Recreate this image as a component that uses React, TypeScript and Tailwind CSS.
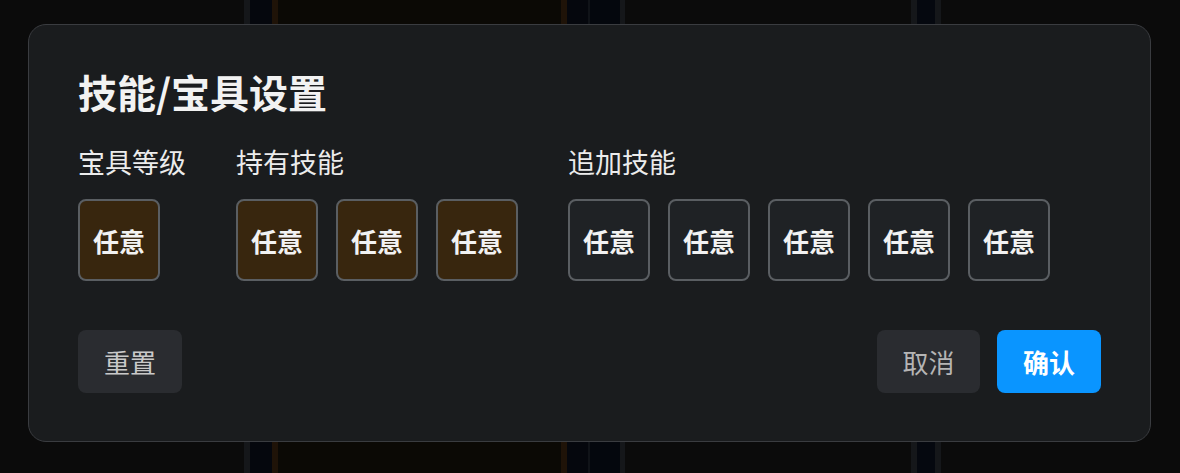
import React from "react";

const font = { fontFamily: '"Noto Sans CJK SC", "Noto Sans", sans-serif' };

function SlotBox({ gold }: { gold?: boolean }) {
  return (
    <div
      className={
        "w-[82px] h-[82px] rounded-[8px] border-2 border-[#5a5e62] flex items-center justify-center text-[26px] font-bold text-[#f2f2f2] " +
        (gold ? "bg-[#38260e]" : "bg-[#1f2225]")
      }
    >
      任意
    </div>
  );
}

function Group({ label, count, gold }: { label: string; count: number; gold?: boolean }) {
  return (
    <div className="flex flex-col gap-[23px]">
      <div className="text-[27px] leading-[28px] text-[#ececec]">{label}</div>
      <div className="flex gap-[18px]">
        {Array.from({ length: count }).map((_, i) => (
          <SlotBox key={i} gold={gold} />
        ))}
      </div>
    </div>
  );
}

export default function App() {
  return (
    <div className="relative w-[1180px] h-[473px] overflow-hidden bg-[#0b0b0b]" style={font}>
      {/* page behind the overlay */}
      <div className="flex h-full">
        <div className="w-[244px] bg-[#0b0b0b]" />
        <div className="w-[6px] bg-[#15171a]" />
        <div className="w-[22px] bg-[#05070d]" />
        <div className="w-[6px] bg-[#1f1308]" />
        <div className="w-[283px] bg-[#0b0905]" />
        <div className="w-[6px] bg-[#1f1308]" />
        <div className="w-[21px] bg-[#05070d]" />
        <div className="w-[2px] bg-[#101318]" />
        <div className="w-[30px] bg-[#04070d]" />
        <div className="w-[5px] bg-[#15171a]" />
        <div className="w-[286px] bg-[#0b0b0b]" />
        <div className="w-[6px] bg-[#15171a]" />
        <div className="w-[18px] bg-[#05080f]" />
        <div className="w-[6px] bg-[#15171a]" />
        <div className="flex-1 bg-[#0b0b0b]" />
      </div>

      {/* dialog */}
      <div className="absolute left-[28px] top-[24px] w-[1123px] h-[418px] rounded-[18px] border border-[#3a3c40] bg-[#1a1c1e] pt-[47px] px-[49px] flex flex-col">
        <h1 className="text-[39px] leading-[39px] font-bold text-[#f2f2f2]">技能/宝具设置</h1>
        <div className="mt-[37px] flex gap-[50px]">
          <Group label="宝具等级" count={1} gold />
          <Group label="持有技能" count={3} gold />
          <Group label="追加技能" count={5} />
        </div>
        <div className="mt-[49px] flex items-center">
          <button className="w-[104px] h-[63px] rounded-[8px] bg-[#2a2c30] text-[26px] text-[#c9c9c9]">
            重置
          </button>
          <div className="flex-1" />
          <div className="flex gap-[17px]">
            <button className="w-[103px] h-[63px] rounded-[8px] bg-[#2a2c30] text-[26px] text-[#b5b5b5]">
              取消
            </button>
            <button className="w-[104px] h-[63px] rounded-[8px] bg-[#0a95ff] text-[26px] font-bold text-white">
              确认
            </button>
          </div>
        </div>
      </div>
    </div>
  );
}
